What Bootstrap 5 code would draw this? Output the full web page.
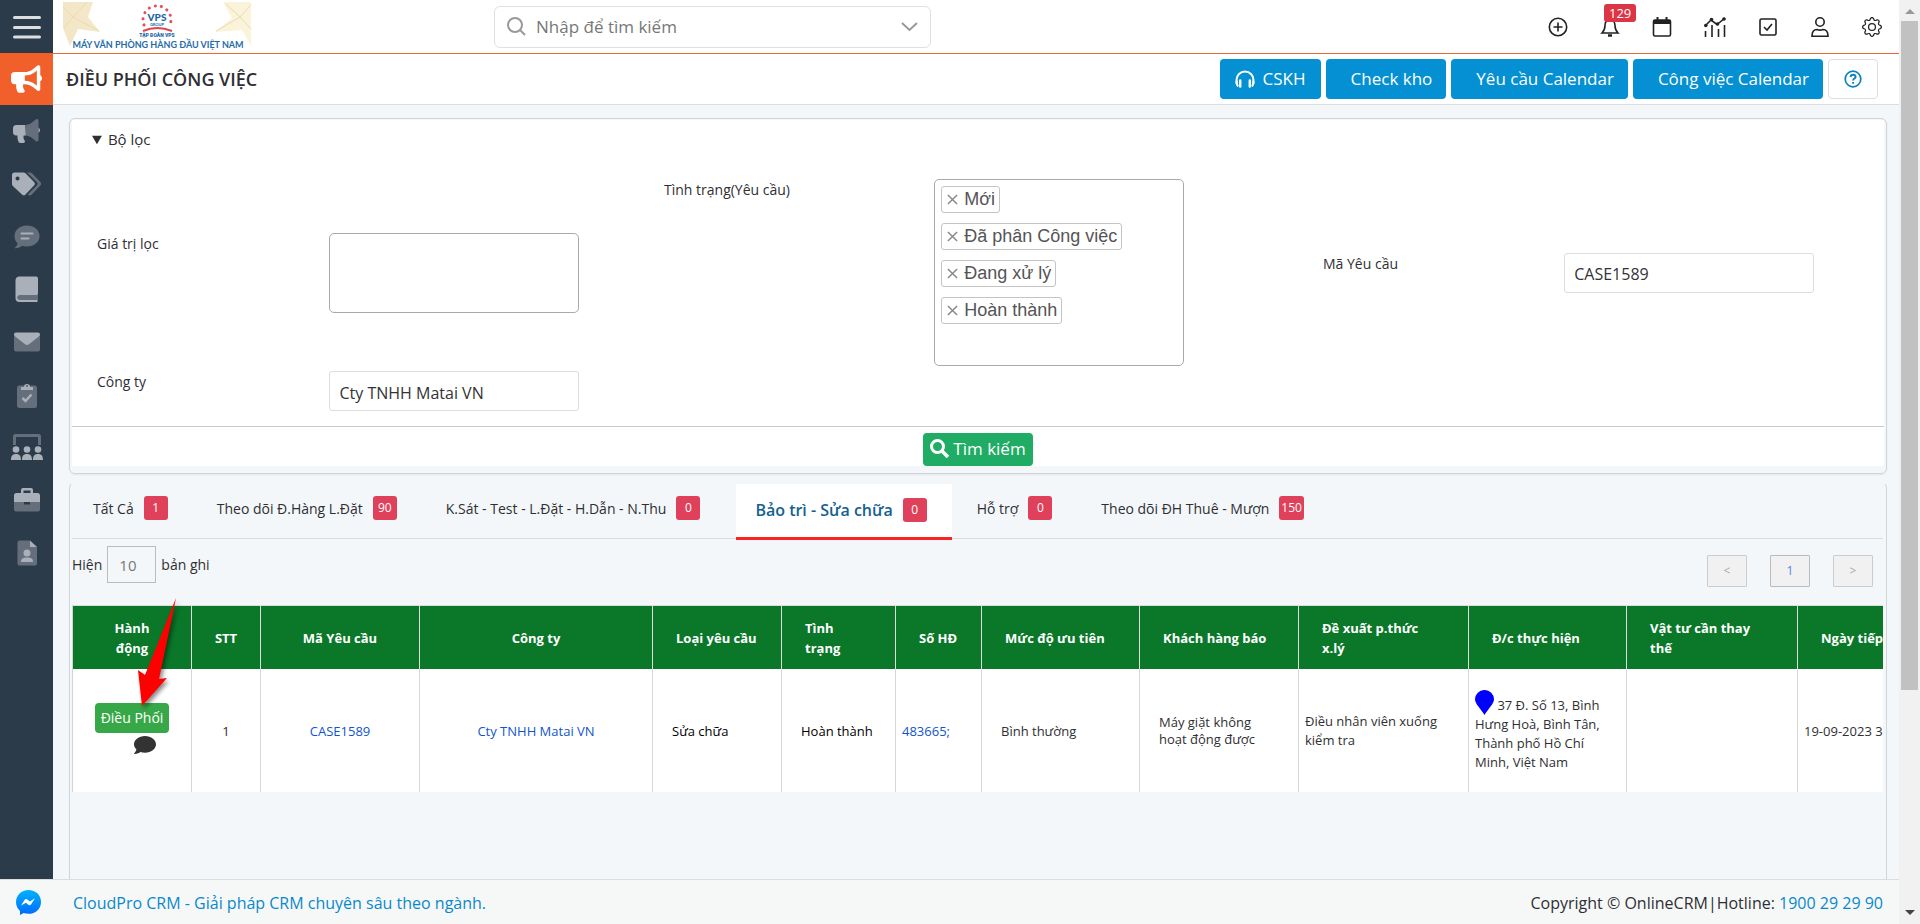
<!DOCTYPE html>
<html lang="vi">
<head>
<meta charset="utf-8">
<meta name="viewport" content="width=device-width, initial-scale=1">
<title>Điều phối công việc</title>
<link href="https://cdn.jsdelivr.net/npm/bootstrap@5.3.0/dist/css/bootstrap.min.css" rel="stylesheet">
<style>
  body { font-family: "Open Sans", "Noto Sans", sans-serif; font-size: 14px; color: #2f2f33; background: #f3f7fa; }
  a { text-decoration: none; color: #0a88cc; }
  svg { display: block; flex: none; }

  /* sidebar */
  .side-rail { width: 53px; background: #2c3b49; }
  .rail-item { height: 53px; width: 53px; border: 0; background: none; color: #aab0b9; padding: 0; display: flex; align-items: center; justify-content: center; }
  .rail-current { height: 52px; background: #f15f2a; color: #fff; }
  .rail-list { height: 474px; }
  .rail-list .rail-item { flex: 1 1 0; height: auto; }
  .dim { opacity: .45; }

  /* header */
  .app-head { height: 54px; border-bottom: 1px solid #ea6a35; background: #fff; }
  .brand { margin-left: 10px; }
  .search-box { width: 437px; height: 42px; border: 1px solid #e0e0e0; border-radius: 6px; margin-left: 241px; padding: 0 12px; }
  .search-box input { border: 0; outline: 0; font-size: 17px; color: #666; background: none; }
  .search-box input::placeholder { color: #777; opacity: 1; }
  .search-box button, .head-icons button { border: 0; background: none; padding: 0; color: #222; }
  .head-icons { gap: 32px; padding-right: 17px; }
  .bell-count { top: -13px; left: 4px; background: #dc3545; color: #fff; font-size: 13px; line-height: 18px; padding: 0 5px; border-radius: 3px; }

  .title-bar { height: 51px; border-bottom: 1px solid #ddd; background: #fff; padding: 0 21px 0 13px; }
  .title-bar h1 { font-size: 18px; font-weight: 600; line-height: 24px; }
  .actions { gap: 5px; }
  .btn-sky { background: #0490d2; color: #fff; height: 40px; font-size: 17px; line-height: 24px; padding: 0 14px 0 25px; border: 0; border-radius: 4px; }
  .btn-sky:hover { background: #037fba; color: #fff; }
  .btn-sky.with-icon { padding: 0 15px; }
  .btn-help { width: 50px; height: 40px; border: 1px solid #ddd; border-radius: 4px; background: #fff; padding: 0; }

  /* filter */
  .work-area { padding: 13px 12px 0 16px; }
  .filter-panel { border: 1px solid #d2d5d7; border-radius: 6px; padding: 1px 2px 7px; box-shadow: 0 1px 2px #0001; }
  .filter-panel summary { font-size: 15px; font-weight: 500; line-height: 24px; padding: 7px 20px; }
  .filter-body { background: #fff; }
  .filter-grid { display: grid; grid-template-columns: 567fr 659fr 561fr; row-gap: 5px; padding: 21px 0 15px 25px; align-items: center; }
  .pair > label, .pair > .pair-label { flex: 0 0 41%; font-size: 14px; line-height: 22px; }
  .pair.pair-wide > label { flex-basis: 43%; }
  .field { width: 250px; height: 40px; border: 1px solid #ddd; border-radius: 3px; padding: 3px 9px 0; font-size: 16px; color: #333; background: #fff; }
  .area { width: 250px; height: 80px; border: 1px solid #aaa; border-radius: 5px; resize: none; }
  .tag-box { width: 250px; min-height: 187px; border: 1px solid #aaa; border-radius: 5px; padding: 6px; gap: 10px; font-family: "Liberation Sans", Arial, sans-serif; }
  .tag-item { height: 27px; border: 1px solid #c4c4c4; border-radius: 3px; font-size: 18px; line-height: 25px; color: #555; padding: 0 4px 0 5px; gap: 6px; }
  .tag-item button { border: 0; background: none; padding: 0; color: #888; }
  .filter-foot { border-top: 1px solid #c9c9c9; padding-top: 6px; }
  .btn-find { background: #20ac64; color: #fff; height: 33px; font-size: 17px; line-height: 24px; padding: 0 7px 2px; border: 0; border-radius: 4px; gap: 4px; }
  .btn-find:hover { background: #1b9656; color: #fff; }

  /* results */
  .result-panel { border: 1px solid #d2d5d7; border-top-color: transparent; border-bottom: 0; border-radius: 6px 6px 0 0; margin-top: 8px; padding: 1px 3px 0 2px; }
  .tab-strip { height: 55px; border-bottom: 1px solid #ddd; padding-right: 24px; }
  .tab-link { height: 54px; padding: 3px 28px 9px 21px; display: flex; align-items: center; gap: 10px; color: #2f2f33; font-size: 14px; }
  .tab-link.current { height: 56px; padding: 3px 25px 4px 19px; margin: 0 4px 0 8px; background: #fff; color: #14618f; font-size: 16px; font-weight: 600; border-bottom: 3px solid #fb2222; }
  .count-box { background: #df415b; color: #fff; min-width: 24px; height: 24px; border-radius: 3px; font-size: 12px; font-weight: 500; line-height: 24px; text-align: center; padding: 0 2px; }
  .list-tools { height: 66px; padding: 7px 10px 0 0; }
  .list-tools .page-size { width: 49px; height: 37px; border: 1px solid #bbb; background: none; color: #777; padding: 0 11px; font-size: 15px; border-radius: 0; }
  .size-pick { gap: 5px; }
  .pager { gap: 23px; padding-top: 9px; }
  .pager button { width: 40px; height: 32px; border: 1px solid #ccc; background: #f1f1f1; color: #aaa; font-size: 12px; padding: 0; border-radius: 1px; }
  .pager .on { border-color: #bbb; color: #5a7ff0; }

  .list-wrap { overflow: hidden; border-top: 1px solid #ddd; border-left: 1px solid #d4d4d4; }
  .list-table { table-layout: fixed; width: 1990px; border-collapse: separate; border-spacing: 0; font-size: 13px; line-height: 19px; }
  .list-table th { background: #0a7729; color: #fff; height: 63px; font-weight: 700; line-height: 20px; padding: 0 0 0 23px; border-right: 1px solid #ddd; vertical-align: middle; }
  .list-table td { background: #fff; height: 123px; padding: 1px 20px 0 6px; border-right: 1px solid #d8d8d8; vertical-align: middle; }
  .list-table td.inset { padding-left: 19px; }
  .list-table td a { color: #1155cc; }
  .list-table .mid { text-align: center; padding-left: 5px; padding-right: 5px; }
  .list-table td.tight { line-height: 17px; }
  .btn-assign { background: #37a847; color: #fff; height: 30px; font-size: 14px; line-height: 20px; padding: 0 6px; border: 0; border-radius: 4px; }
  .btn-assign:hover { background: #2d8c3a; color: #fff; }
  .note-btn { border: 0; background: none; padding: 3px 0 0 26px; }
  .list-zone { position: relative; }
  .pointer-mark { position: absolute; left: 61px; top: -12px; filter: drop-shadow(2px 3px 2px #0007); pointer-events: none; }

  .app-foot { height: 45px; border-top: 1px solid #ddd; background: #f6f8f8; font-size: 16px; padding: 1px 16px 0; }

  .scroll-track { width: 21px; background: #f1f1f1; }
  .scroll-thumb { width: 17px; height: 669px; background: #c1c1c1; }
</style>
</head>
<body>
<div class="d-flex vh-100 overflow-hidden">
  <div class="d-flex flex-column flex-grow-1 overflow-hidden">
    <div class="d-flex flex-grow-1 overflow-hidden">
      <nav class="side-rail flex-shrink-0" aria-label="Menu">
        <button class="rail-item" aria-label="Menu"><svg width="28" height="24" viewBox="0 0 28 24" stroke="#dcdfe2" stroke-width="3" stroke-linecap="round"><path d="M1.500 2.500h25M1.500 12.500h25M1.500 22h25"/></svg></button>
        <a href="#" class="rail-item rail-current" aria-label="Marketing"><svg width="31" height="30" viewBox="0 0 576 512" fill="currentColor"><path d="M576 240c0-23.630-12.950-44.040-32-55.120V32.010C544 23.260 537.020 0 512 0c-7.120 0-14.190 2.380-19.980 7.020l-85.030 68.030C364.280 109.190 310.660 128 256 128H64c-35.350 0-64 28.650-64 64v96c0 35.350 28.650 64 64 64h33.700c-1.390 10.480-2.180 21.140-2.180 32 0 39.770 9.260 77.350 25.560 110.940 5.190 10.690 16.520 17.060 28.400 17.060h74.280c26.050 0 41.690-29.840 25.900-50.560-16.400-21.520-26.150-48.360-26.150-77.440 0-11.110 1.620-21.790 4.410-32H256c54.660 0 108.280 18.810 150.980 52.950l85.030 68.030a32.023 32.023 0 0 0 19.980 7.020c24.920 0 32-22.780 32-32V295.130C563.050 284.040 576 263.630 576 240zm-96 141.420l-33.050-26.440C392.950 311.780 325.120 288 256 288v-96c69.120 0 136.950-23.780 190.950-66.980L480 98.580v282.840z"/></svg></a>
        <div class="rail-list d-flex flex-column">
          <a href="#" class="rail-item" aria-label="Chiến dịch"><svg width="27" height="26" viewBox="0 0 576 512" fill="currentColor"><path class="dim" d="M544 32v416c0 9-7 32-32 32-7 0-14-2-20-7l-85-68c-40-33-92-51-145-53V128c53-2 105-20 145-53l85-68c6-5 13-7 20-7 25 0 32 23 32 32z"/><path d="M544 185v110c19-11 32-31 32-55s-13-44-32-55zM256 128H64c-35 0-64 29-64 64v96c0 35 29 64 64 64h34c-2 10-3 21-3 32 0 40 10 77 26 111 5 11 17 17 28 17h75c26 0 41-30 25-51-16-21-26-48-26-77 0-11 2-22 5-32h43z"/></svg></a>
          <a href="#" class="rail-item" aria-label="Nhãn"><svg width="29" height="24" viewBox="0 0 29 24" fill="currentColor"><path d="M0 3a2.500 2.500 0 0 1 2.500-2.500h9a3 3 0 0 1 2 .8L22 10a2.500 2.500 0 0 1 0 3.500l-8.500 9a2.500 2.500 0 0 1-3.500 0L.8 14A3 3 0 0 1 0 12zM5.500 4.500a2 2 0 1 0 .1 0z" fill-rule="evenodd"/><path class="dim" d="M15 .5h3a3 3 0 0 1 2 .8L28.300 10a2.500 2.500 0 0 1 0 3.500l-8.500 9a3 3 0 0 1-4 0l9-9a2.500 2.500 0 0 0 0-3.500z"/></svg></a>
          <a href="#" class="rail-item" aria-label="Trao đổi"><svg width="26" height="24" viewBox="0 0 26 24"><path class="dim" fill="currentColor" d="M13 .5C6 .5.500 5 .500 11c0 3 1.200 5.500 3.200 7.500C3 21 1 22.600.500 23.200c2.800.3 6-1 7.500-2.400 1.500.5 3 .8 5 .8 7 0 12.500-4.500 12.500-10.500S20 .5 13 .5z"/><path d="M7.500 8.500h11M7.500 13.500h7" stroke="currentColor" stroke-width="2" stroke-linecap="round"/></svg></a>
          <a href="#" class="rail-item" aria-label="Sổ"><svg width="24" height="26" viewBox="0 0 24 26"><path class="dim" fill="currentColor" d="M3 19h20v5H3z"/><path d="M4 .5h17a2 2 0 0 1 2 2v15a1.500 1.500 0 0 1-1.500 1.500H5a2.500 2.500 0 0 0 0 5h17.500V26H4.500A4 4 0 0 1 .5 22V4.500A4 4 0 0 1 4 .5z" fill="currentColor"/></svg></a>
          <a href="#" class="rail-item" aria-label="Thư"><svg width="26" height="20" viewBox="0 0 26 20" fill="currentColor"><path class="dim" d="M0 4l10.500 7.500q2.500 2 5 0L26 4v13.500a2 2 0 0 1-2 2H2a2 2 0 0 1-2-2z"/><path d="M2 .5h22a2 2 0 0 1 2 2c0 1-.5 1.700-1.200 2.200L15 12.300q-2 1.500-4 0L1.200 4.700A2.700 2.700 0 0 1 0 2.500a2 2 0 0 1 2-2z"/></svg></a>
          <a href="#" class="rail-item" aria-label="Công việc"><svg width="20" height="26" viewBox="0 0 20 26"><rect class="dim" y="3.500" width="20" height="22.500" rx="2.500" fill="currentColor"/><path d="M4 8V5h3a3 3 0 1 1 6 0h3v3zM10 3a1 1 0 1 0 .1 0z" fill="currentColor" fill-rule="evenodd"/><path d="M5.500 16l3 3 6-6.500" stroke="currentColor" stroke-width="2.500" fill="none"/></svg></a>
          <a href="#" class="rail-item" aria-label="Lớp"><svg width="32" height="26" viewBox="0 0 32 26" fill="currentColor"><path class="dim" d="M2 11V2.500A2.500 2.500 0 0 1 4.500 0h23A2.500 2.500 0 0 1 30 2.500V11h-3V3H5v8z"/><circle cx="5" cy="15.500" r="3.300"/><circle cx="16" cy="15.500" r="3.300"/><circle cx="27" cy="15.500" r="3.300"/><path d="M0 26c0-4 1.500-6 5-6s5 2 5 6zM11 26c0-4 1.500-6 5-6s5 2 5 6zM22 26c0-4 1.500-6 5-6s5 2 5 6z"/></svg></a>
          <a href="#" class="rail-item" aria-label="Hồ sơ"><svg width="26" height="24" viewBox="0 0 26 24" fill="currentColor"><path class="dim" d="M0 14h10v2.500h6V14h10v7.500a2 2 0 0 1-2 2H2a2 2 0 0 1-2-2z"/><path d="M7 5V2a2 2 0 0 1 2-2h8a2 2 0 0 1 2 2v3h4.500A2.500 2.500 0 0 1 26 7.500V14H0V7.500A2.500 2.500 0 0 1 2.500 5zm2.500 0h7V2.500h-7z" fill-rule="evenodd"/></svg></a>
          <a href="#" class="rail-item" aria-label="Danh bạ"><svg width="20" height="26" viewBox="0 0 20 26"><path class="dim" fill="currentColor" d="M2.500.5H13V7h7v16.500a2 2 0 0 1-2 2H2.500a2 2 0 0 1-2-2v-21a2 2 0 0 1 2-2z"/><g fill="currentColor"><path d="M13 .5L20 7h-7z"/><circle cx="10" cy="13" r="3.500"/><path d="M4 22c0-3.500 2-4.500 6-4.500s6 1 6 4.500z"/></g></svg></a>
        </div>
      </nav>

      <div class="flex-grow-1 overflow-hidden d-flex flex-column">
        <header class="app-head d-flex align-items-center flex-shrink-0">
          <a href="#" class="brand" aria-label="VPS Group">
            <svg width="190" height="50" viewBox="0 0 190 50">
              <defs><linearGradient id="gold" x1="0" x2="1"><stop offset="0" stop-color="#f3e6c6"/><stop offset="1" stop-color="#fbf4dc"/></linearGradient></defs>
              <path fill="url(#gold)" d="M0 0h30l-5 15 12 15-22-3-8 17L0 26zM160 0h28v44l-9-16-27 2 17-14z"/>
              <path d="M0 5l10 10L24 0M10 15l-9 11M10 15l26 14M188 3l-11 12-14-13M177 15l11 12M177 15l-24 14" stroke="#eadbb2" fill="none"/>
              <path d="M81 23A14 14 0 1 1 107 23" fill="none" stroke="#e0505c" stroke-width="3" stroke-linecap="round" stroke-dasharray="0.1 6.200"/>
              <path d="M80 29q14-6 29 0" stroke="#dd4650" stroke-width="2" fill="none"/>
              <text x="94" y="19" text-anchor="middle" font-family="Lato" font-weight="900" font-size="10" fill="#1a67a8">VPS</text>
              <text x="94" y="24" text-anchor="middle" font-family="Lato" font-weight="700" font-size="4" fill="#1a67a8">GROUP</text>
              <text x="94" y="35" text-anchor="middle" font-family="Roboto" font-weight="900" font-size="5" fill="#1a67a8">TẬP ĐOÀN VPS</text>
              <text x="95" y="46" text-anchor="middle" font-family="Lato" font-weight="700" font-size="9" fill="#1f6ba8">MÁY VĂN PHÒNG HÀNG ĐẦU VIỆT NAM</text>
            </svg>
          </a>
          <form class="search-box d-flex align-items-center" role="search" onsubmit="return false">
            <svg width="19" height="19" viewBox="0 0 19 19" fill="none" stroke="#999" stroke-width="2"><circle cx="8" cy="8" r="7"/><path d="M13 13l5 5"/></svg>
            <input class="flex-grow-1 ms-2" type="text" placeholder="Nhập để tìm kiếm" aria-label="Nhập để tìm kiếm">
            <button type="button" aria-label="Mở rộng"><svg width="17" height="10" viewBox="0 0 17 10" fill="none" stroke="#999" stroke-width="2"><path d="M1 1l7.500 7L16 1"/></svg></button>
          </form>
          <div class="head-icons d-flex ms-auto align-items-center">
            <button aria-label="Thêm"><svg width="20" height="20" viewBox="0 0 20 20" fill="none" stroke="currentColor" stroke-width="1.600"><circle cx="10" cy="10" r="8.700"/><path d="M10 5.500v9M5.500 10h9"/></svg></button>
            <button class="position-relative" aria-label="Thông báo"><svg width="20" height="20" viewBox="0 0 20 20" fill="none" stroke="currentColor" stroke-width="1.600"><path d="M2 16h16q-3-3-3-7.500C15 5 13 3 10 3S5 5 5 8.500Q5 13 2 16z"/><path d="M8 18.500h4" stroke-width="2.500"/></svg><span class="bell-count position-absolute">129</span></button>
            <button aria-label="Lịch"><svg width="20" height="20" viewBox="0 0 20 20" fill="none" stroke="currentColor" stroke-width="1.600"><rect x="1.500" y="3" width="17" height="16" rx="1.500"/><path d="M1.500 5h17" stroke-width="4"/><path d="M5.500 0v3M14.500 0v3" stroke-width="2"/></svg></button>
            <button aria-label="Báo cáo"><svg width="22" height="20" viewBox="0 0 22 20" fill="none" stroke="currentColor" stroke-width="1.600"><path d="M1 9l6-6 6 4.500L21 1M1.500 14v6M8 8v12M14.500 12v8M20.500 8v12"/><g fill="currentColor" stroke="none"><circle cx="1.800" cy="8.500" r="1.800"/><circle cx="7.500" cy="2.500" r="1.800"/><circle cx="13.500" cy="7" r="1.800"/><circle cx="20" cy="2" r="1.800"/></g></svg></button>
            <button aria-label="Việc cần làm"><svg width="20" height="18" viewBox="-1 0 20 18" fill="none" stroke="currentColor" stroke-width="1.600"><rect x="1" y="1" width="16" height="16" rx="1.500"/><path d="M5 9l3 3 5-6"/></svg></button>
            <button aria-label="Tài khoản"><svg width="20" height="20" viewBox="0 0 20 20" fill="none" stroke="currentColor" stroke-width="1.600"><circle cx="10" cy="5" r="4.200"/><path d="M2 19.200c0-4.500 2-6.700 5-6.700 2 .8 4 .8 6 0 3 0 5 2.200 5 6.700z"/></svg></button>
            <button aria-label="Cài đặt"><svg width="20" height="20" viewBox="0 0 16 16" fill="currentColor"><path d="M8 4.754a3.246 3.246 0 1 0 0 6.492 3.246 3.246 0 0 0 0-6.492zM5.754 8a2.246 2.246 0 1 1 4.492 0 2.246 2.246 0 0 1-4.492 0z"/><path d="M9.796 1.343c-.527-1.790-3.065-1.790-3.592 0l-.094.319a.873.873 0 0 1-1.255.520l-.292-.160c-1.640-.892-3.433.902-2.540 2.541l.159.292a.873.873 0 0 1-.520 1.255l-.319.094c-1.790.527-1.790 3.065 0 3.592l.319.094a.873.873 0 0 1 .520 1.255l-.160.292c-.892 1.640.901 3.434 2.541 2.540l.292-.159a.873.873 0 0 1 1.255.520l.094.319c.527 1.790 3.065 1.790 3.592 0l.094-.319a.873.873 0 0 1 1.255-.520l.292.160c1.640.893 3.434-.902 2.540-2.541l-.159-.292a.873.873 0 0 1 .520-1.255l.319-.094c1.790-.527 1.790-3.065 0-3.592l-.319-.094a.873.873 0 0 1-.520-1.255l.160-.292c.893-1.640-.902-3.433-2.541-2.540l-.292.159a.873.873 0 0 1-1.255-.520l-.094-.319zm-2.633.283c.246-.835 1.428-.835 1.674 0l.094.319a1.873 1.873 0 0 0 2.693 1.115l.291-.160c.764-.415 1.600.420 1.184 1.185l-.159.292a1.873 1.873 0 0 0 1.116 2.692l.318.094c.835.246.835 1.428 0 1.674l-.319.094a1.873 1.873 0 0 0-1.115 2.693l.160.291c.415.764-.420 1.600-1.185 1.184l-.291-.159a1.873 1.873 0 0 0-2.693 1.116l-.094.318c-.246.835-1.428.835-1.674 0l-.094-.319a1.873 1.873 0 0 0-2.692-1.115l-.292.160c-.764.415-1.600-.420-1.184-1.185l.159-.291A1.873 1.873 0 0 0 1.945 8.930l-.319-.094c-.835-.246-.835-1.428 0-1.674l.319-.094A1.873 1.873 0 0 0 3.060 4.377l-.160-.292c-.415-.764.420-1.600 1.185-1.184l.292.159a1.873 1.873 0 0 0 2.692-1.115l.094-.319z"/></svg></button>
          </div>
        </header>

        <div class="title-bar d-flex align-items-center justify-content-between flex-shrink-0">
          <h1 class="m-0">ĐIỀU PHỐI CÔNG VIỆC</h1>
          <div class="d-flex actions">
            <button class="btn btn-sky with-icon d-flex align-items-center gap-2"><svg width="20" height="18" viewBox="0 0 20 18" fill="none" stroke="currentColor" stroke-width="2"><path d="M1.500 14v-4a8.500 8.500 0 0 1 17 0v4"/><path d="M5.200 10.500v6M14.800 10.500v6" stroke-width="2.500" stroke-linecap="round"/><path d="M2 10.500q-1 3 1 6M18 10.500q1 3-1 6"/></svg>CSKH</button>
            <button class="btn btn-sky">Check kho</button>
            <button class="btn btn-sky">Yêu cầu Calendar</button>
            <button class="btn btn-sky">Công việc Calendar</button>
            <button class="btn btn-help d-flex align-items-center justify-content-center" aria-label="Trợ giúp"><svg width="18" height="18" viewBox="0 0 18 18" fill="none" stroke="#0a80c0" stroke-width="1.700"><circle cx="9" cy="9" r="7.800"/><path d="M6.500 7q.3-2.200 2.600-2.200T11.600 7c0 1.600-2.500 1.600-2.500 3.400M9.100 12v1.800" stroke-width="1.900"/></svg></button>
          </div>
        </div>

        <main class="work-area flex-grow-1 overflow-hidden d-flex flex-column">
          <section class="filter-panel flex-shrink-0">
            <details class="filter-body" open>
              <summary>Bộ lọc</summary>
              <form onsubmit="return false">
                <div class="filter-grid">
                  <div class="pair d-flex align-items-start"><label for="fval">Giá trị lọc</label><textarea id="fval" class="area"></textarea></div>
                  <div class="pair d-flex align-items-start"><span class="pair-label" id="st-label">Tình trạng(Yêu cầu)</span>
                    <div class="tag-box d-flex flex-column align-items-start" role="group" aria-labelledby="st-label">
                      <span class="tag-item d-flex align-items-center"><button type="button" aria-label="Bỏ Mới"><svg width="11" height="11" viewBox="0 0 12 12" stroke="currentColor" stroke-width="1.600"><path d="M1 1l10 10M11 1L1 11"/></svg></button>Mới</span>
                      <span class="tag-item d-flex align-items-center"><button type="button" aria-label="Bỏ Đã phân Công việc"><svg width="11" height="11" viewBox="0 0 12 12" stroke="currentColor" stroke-width="1.600"><path d="M1 1l10 10M11 1L1 11"/></svg></button>Đã phân Công việc</span>
                      <span class="tag-item d-flex align-items-center"><button type="button" aria-label="Bỏ Đang xử lý"><svg width="11" height="11" viewBox="0 0 12 12" stroke="currentColor" stroke-width="1.600"><path d="M1 1l10 10M11 1L1 11"/></svg></button>Đang xử lý</span>
                      <span class="tag-item d-flex align-items-center"><button type="button" aria-label="Bỏ Hoàn thành"><svg width="11" height="11" viewBox="0 0 12 12" stroke="currentColor" stroke-width="1.600"><path d="M1 1l10 10M11 1L1 11"/></svg></button>Hoàn thành</span>
                    </div>
                  </div>
                  <div class="pair pair-wide d-flex align-items-start"><label for="fcode">Mã Yêu cầu</label><input id="fcode" class="field" type="text" value="CASE1589"></div>
                  <div class="pair d-flex align-items-start"><label for="fcomp">Công ty</label><input id="fcomp" class="field" type="text" value="Cty TNHH Matai VN"></div>
                </div>
                <div class="filter-foot d-flex justify-content-center">
                  <button class="btn btn-find d-flex align-items-center"><svg width="19" height="19" viewBox="0 0 19 19" fill="none" stroke="currentColor" stroke-width="3"><circle cx="7.500" cy="7.500" r="6"/><path d="M12 12l6 6" stroke-width="3.600"/></svg>Tìm kiếm</button>
                </div>
              </form>
            </details>
          </section>

          <section class="result-panel flex-grow-1">
            <nav class="tab-strip d-flex align-items-start">
              <a href="#" class="tab-link">Tất Cả <span class="count-box">1</span></a>
              <a href="#" class="tab-link">Theo dõi Đ.Hàng L.Đặt <span class="count-box">90</span></a>
              <a href="#" class="tab-link">K.Sát - Test - L.Đặt - H.Dẫn - N.Thu <span class="count-box">0</span></a>
              <a href="#" class="tab-link current" aria-current="page">Bảo trì - Sửa chữa <span class="count-box">0</span></a>
              <a href="#" class="tab-link">Hỗ trợ <span class="count-box">0</span></a>
              <a href="#" class="tab-link">Theo dõi ĐH Thuê - Mượn <span class="count-box">150</span></a>
            </nav>
            <div class="list-tools d-flex justify-content-between align-items-start">
              <div class="size-pick d-flex align-items-center"><label for="psize">Hiện</label><input id="psize" class="page-size" type="text" value="10"><span>bản ghi</span></div>
              <div class="pager d-flex"><button aria-label="Trang trước">&lt;</button><button class="on">1</button><button aria-label="Trang sau">&gt;</button></div>
            </div>
            <div class="list-zone">
              <div class="list-wrap">
                <table class="list-table">
                  <colgroup><col style="width:119px"><col style="width:69px"><col style="width:159px"><col style="width:233px"><col style="width:129px"><col style="width:114px"><col style="width:86px"><col style="width:158px"><col style="width:159px"><col style="width:170px"><col style="width:158px"><col style="width:171px"><col></colgroup>
                  <thead><tr>
                    <th class="mid">Hành<br>động</th><th class="mid">STT</th><th class="mid">Mã Yêu cầu</th><th class="mid">Công ty</th><th>Loại yêu cầu</th><th>Tình<br>trạng</th><th>Số HĐ</th><th>Mức độ ưu tiên</th><th>Khách hàng báo</th><th>Đề xuất p.thức<br>x.lý</th><th>Đ/c thực hiện</th><th>Vật tư cần thay<br>thế</th><th>Ngày tiếp nhận</th>
                  </tr></thead>
                  <tbody><tr>
                    <td class="mid"><button class="btn btn-assign">Điều Phối</button><br><button class="note-btn" aria-label="Ghi chú"><svg width="22" height="18" viewBox="0 32 512 448" preserveAspectRatio="none" fill="#333"><path d="M256 32C114.600 32 0 125.100 0 240c0 49.600 21.400 95 57 130.700C44.500 421.100 2.700 466 2.200 466.500c-2.200 2.300-2.800 5.700-1.500 8.700S4.800 480 8 480c66.300 0 116-31.800 140.600-51.400 32.700 12.300 69 19.400 107.400 19.400 141.400 0 256-93.100 256-208S397.400 32 256 32z"/></svg></button></td>
                    <td class="mid">1</td>
                    <td class="mid"><a href="#">CASE1589</a></td>
                    <td class="mid"><a href="#">Cty TNHH Matai VN</a></td>
                    <td class="inset text-black">Sửa chữa</td>
                    <td class="inset text-black text-nowrap">Hoàn thành</td>
                    <td><a href="#">483665;</a></td>
                    <td class="inset">Bình thường</td>
                    <td class="inset tight">Máy giặt không hoạt động được</td>
                    <td>Điều nhân viên xuống kiểm tra</td>
                    <td><svg class="d-inline-block align-bottom" width="19" height="25" viewBox="0 0 19 25" fill="#00f"><path d="M9.500 0A9.300 9.300 0 0 1 19 9.300C19 14 13 19 9.500 25 6 19 0 14 0 9.300A9.300 9.300 0 0 1 9.500 0z"/></svg> 37 Đ. Số 13, Bình Hưng Hoà, Bình Tân, Thành phố Hồ Chí Minh, Việt Nam</td>
                    <td></td>
                    <td class="text-nowrap">19-09-2023 3:30 PM</td>
                  </tr></tbody>
                </table>
              </div>
              <svg class="pointer-mark" width="50" height="118" viewBox="0 0 50 118" fill="#f00"><path d="M43 5L26 86l8-1L9 113 5 77l7 5z"/></svg>
            </div>
          </section>
        </main>
      </div>
    </div>
    <footer class="app-foot d-flex align-items-center flex-shrink-0">
      <a href="#" aria-label="Messenger"><svg width="25" height="25" viewBox="0 0 25 25"><defs><linearGradient id="msg" x2="0" y2="1"><stop offset="0" stop-color="#00b2ff"/><stop offset="1" stop-color="#006aff"/></linearGradient></defs><path fill="url(#msg)" d="M12.500 0C5.500 0 0 5.100 0 12c0 3.600 1.500 6.700 4 8.900V25l3.700-2c1.500.500 3 .8 4.800.8 7 0 12.500-5 12.500-11.900S19.500 0 12.500 0z"/><path fill="#fff" d="M5 15.500l3.700-5.800q1-1.300 2.300-.4l2.800 2.100 5.200-3.100-4 6.200q-1 1.300-2.300.4L10 12.800z"/></svg></a>
      <a href="#" class="ms-4 ps-2">CloudPro CRM - Giải pháp CRM chuyên sâu theo ngành.</a>
      <span class="ms-auto">Copyright © OnlineCRM|Hotline: <a href="#">1900 29 29 90</a></span>
    </footer>
  </div>
  <div class="scroll-track flex-shrink-0 d-flex flex-column align-items-center" aria-hidden="true">
    <svg width="20" height="21" viewBox="0 0 20 21" fill="#999"><path d="M5 14l5-5 5 5z"/></svg>
    <div class="scroll-thumb"></div>
    <svg class="mt-auto" width="20" height="21" viewBox="0 0 20 21" fill="#444"><path d="M5 7l5 5 5-5z"/></svg>
  </div>
</div>
<script src="https://cdn.jsdelivr.net/npm/bootstrap@5.3.0/dist/js/bootstrap.bundle.min.js"></script>
</body>
</html>
